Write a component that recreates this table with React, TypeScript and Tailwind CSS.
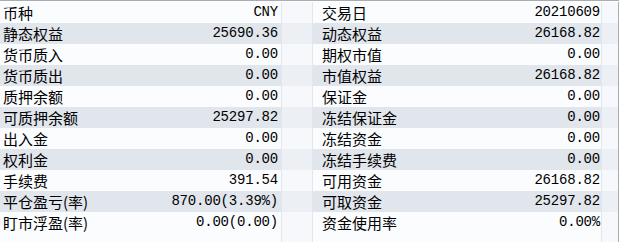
import React from 'react';

const rows: [string, string, string, string][] = [
  ['币种', 'CNY', '交易日', '20210609'],
  ['静态权益', '25690.36', '动态权益', '26168.82'],
  ['货币质入', '0.00', '期权市值', '0.00'],
  ['货币质出', '0.00', '市值权益', '26168.82'],
  ['质押余额', '0.00', '保证金', '0.00'],
  ['可质押余额', '25297.82', '冻结保证金', '0.00'],
  ['出入金', '0.00', '冻结资金', '0.00'],
  ['权利金', '0.00', '冻结手续费', '0.00'],
  ['手续费', '391.54', '可用资金', '26168.82'],
  ['平仓盈亏(率)', '870.00(3.39%)', '可取资金', '25297.82'],
  ['盯市浮盈(率)', '0.00(0.00)', '资金使用率', '0.00%'],
];

const labelFont = "font-['Noto_Sans_CJK_SC',sans-serif] text-[15px]";
const numFont = "font-['Liberation_Mono',monospace] text-[14px] tracking-[-0.2px]";

const Row = ({ cells, gray }: { cells?: [string, string, string, string]; gray: boolean }) => {
  const main = gray ? 'bg-[#e1e5ec]' : 'bg-[#fbfcfe]';
  const side = gray ? 'bg-[#eceff4]' : 'bg-[#f6f8fb]';
  return (
    <div className="flex h-[21px] leading-[21px] text-black">
      <div className={`w-[282px] flex justify-between pl-[3px] pr-[3px] border-r border-[#e2e6ed] ${main}`}>
        <span className={labelFont}>{cells?.[0]}</span>
        <span className={numFont}>{cells?.[1]}</span>
      </div>
      <div className={`w-[31px] border-r border-[#e2e6ed] ${side}`} />
      <div className={`w-[289px] flex justify-between pl-[9px] pr-[1px] border-r border-[#e2e6ed] ${main}`}>
        <span className={labelFont}>{cells?.[2]}</span>
        <span className={numFont}>{cells?.[3]}</span>
      </div>
      <div className={`w-[17px] border-r border-[#a9adb3] ${side}`} />
    </div>
  );
};

export default function App() {
  return (
    <div className="w-[620px] h-[242px] overflow-hidden bg-white">
      <div className="h-[1px] bg-[#a9adb3] w-[619px]" />
      <div className="h-[1px] bg-white" />
      {rows.map((r, i) => (
        <Row key={i} cells={r} gray={i % 2 === 1} />
      ))}
      <Row gray={false} />
    </div>
  );
}
